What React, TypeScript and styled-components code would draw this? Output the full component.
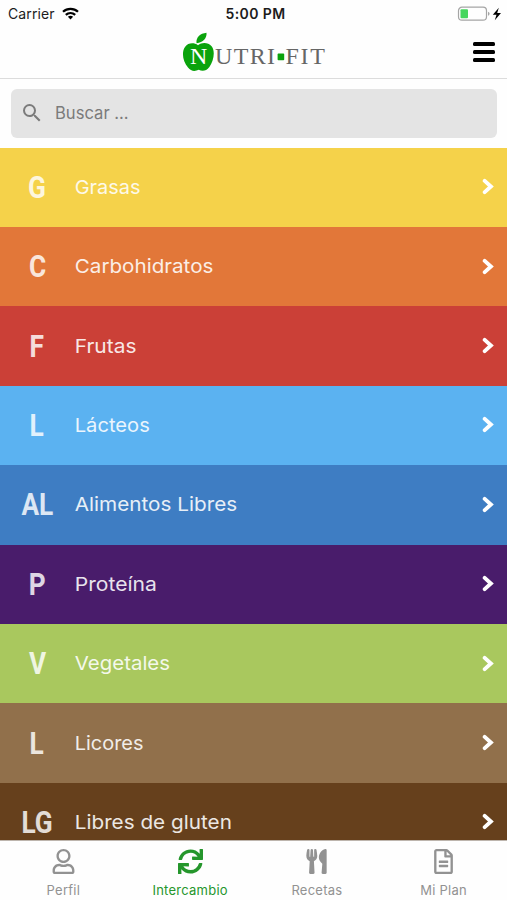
import React from "react";
import styled, { createGlobalStyle } from "styled-components";
import { FaRegUser, FaSync, FaUtensils, FaRegFileAlt } from "react-icons/fa";
import { MdSearch } from "react-icons/md";

const GlobalStyle = createGlobalStyle`
  * { box-sizing: border-box; }
  body { margin: 0; background: #fefefe; font-family: Inter, "Liberation Sans", sans-serif; }
`;

const Screen = styled.main`
  width: 507px;
  height: 900px;
  display: flex;
  flex-direction: column;
  overflow: hidden;
  background: #fefefe;
`;

const StatusBar = styled.div`
  flex: none;
  display: grid;
  grid-template-columns: 1fr auto 1fr;
  align-items: center;
  height: 27px;
  padding: 0 5px 0 8px;
  color: #1c1c1c;
`;

const Carrier = styled.div`
  display: flex;
  align-items: center;
  gap: 7px;
  font-size: 14px;
  letter-spacing: 0.12px;
`;

const Clock = styled.div`
  padding-left: 1px;
  font-size: 14px;
  font-weight: 600;
  letter-spacing: 0.4px;
`;

const Power = styled.div`
  display: flex;
  justify-content: flex-end;
`;

const Header = styled.header`
  flex: none;
  display: grid;
  grid-template-columns: 1fr auto 1fr;
  height: 52px;
  border-bottom: 1.5px solid #dcdcdc;
`;

const Logo = styled.div`
  grid-column: 2;
  display: flex;
  padding-top: 5px;
  svg { display: block; }
`;

const MenuButton = styled.button`
  justify-self: end;
  align-self: start;
  display: flex;
  flex-direction: column;
  gap: 4px;
  margin: 15px 12px 0 0;
  padding: 0;
  border: 0;
  background: none;
`;

const MenuLine = styled.span`
  width: 22px;
  height: 4px;
  border-radius: 1.5px;
  background: #000;
`;

const SearchArea = styled.div`
  flex: none;
  height: 68.6px;
  padding: 10px 10px 0 11px;
`;

const SearchField = styled.div`
  display: flex;
  align-items: center;
  gap: 11px;
  height: 49px;
  padding: 0 0 1px 9px;
  border-radius: 6px;
  background: #e4e4e4;
  color: #7b7b7b;
  font-size: 16.6px;
`;

const List = styled.ul`
  flex: 1;
  min-height: 0;
  overflow: hidden;
  margin: 0;
  padding: 0;
  list-style: none;
`;

const Row = styled.li<{ $color: string }>`
  display: grid;
  grid-template-columns: 74px 1fr 12px;
  align-items: center;
  height: 79.4px;
  padding: 0 13px 1px 0;
  background: ${(p) => p.$color};
  color: #fff;
`;

const Initials = styled.span`
  justify-self: center;
  font-family: Roboto, sans-serif;
  font-size: 32px;
  font-weight: 700;
  line-height: 1;
  opacity: 0.82;
  transform: scaleX(0.82);
`;

const Label = styled.span<{ $stretch: number }>`
  justify-self: start;
  padding: 1px 0 0 0.7px;
  font-size: 19px;
  font-weight: 400;
  white-space: nowrap;
  opacity: 0.88;
  transform: scaleX(${(p) => p.$stretch});
  transform-origin: left center;
`;

const TabBar = styled.nav`
  flex: none;
  display: grid;
  grid-template-columns: repeat(4, 1fr);
  height: 60px;
  border-top: 1px solid #bdb5ad;
  background: #fefefe;
`;

const Tab = styled.a<{ $active?: boolean }>`
  display: flex;
  flex-direction: column;
  align-items: center;
  padding-top: 8px;
  color: ${(p) => (p.$active ? "#25962c" : "#929292")};
  font-size: 13px;
`;

const TabText = styled.span`
  margin-top: 8px;
  line-height: 16px;
  letter-spacing: 0.25px;
`;

const WifiIcon = () => (
  <svg width="17" height="13" viewBox="0 0 17 13" fill="none" stroke="#000" strokeWidth="2.2">
    <path d="M1 4.8C5.2.8 11.8.8 16 4.8" />
    <path d="M3.8 7.9C6.5 5.4 10.5 5.4 13.2 7.9" />
    <path d="M5.9 9.7C7.4 8.4 9.6 8.4 11.1 9.7L8.5 12.5Z" fill="#000" stroke="none" />
  </svg>
);

const BatteryIcon = () => (
  <svg width="45" height="16" viewBox="0 0 45 16">
    <rect x="1.5" y="1.2" width="28" height="13" rx="3.5" fill="none" stroke="#a5a5a5" strokeWidth="1.2" />
    <path d="M31 5.7v4q1.6-.6 1.6-2T31 5.7Z" fill="#a5a5a5" />
    <rect x="3.5" y="3.2" width="7.5" height="9" rx="1" fill="#46d65e" />
    <path d="M41.8 1.8 35.8 8.8h3.7l-1.7 5.4 6.2-7.2h-3.8Z" fill="#000" />
  </svg>
);

const LogoMark = () => (
  <svg width="144" height="42" viewBox="0 0 144 42">
    <path d="M14.5 11.2C13.8 5.4 18 1.5 24.5.8 25 6 21.2 10.5 14.5 11.2Z" fill="#0aa30c" />
    <path
      d="M16 13.2C20 10.2 26 10.3 29.6 14.2 33.7 19.4 31.4 29.5 27.4 35 24.2 39.2 20.3 39.5 16.8 37.8 12.5 39.8 9 39.2 6 35.5 1 29.5-.8 20.5 3 15 6.3 10.5 12 10.5 16 13.2Z"
      fill="#0aa30c"
    />
    <g fontFamily="Liberation Serif, serif">
      <text x="8" y="32" fontSize="24" fill="#fff" textLength="17.3">N</text>
      <text x="33" y="32.3" fontSize="24" fill="#666" textLength="60">UTRI</text>
      <text x="103.5" y="32.3" fontSize="24" fill="#666" textLength="39.5">FIT</text>
    </g>
    <rect x="95.6" y="21.6" width="6.6" height="6.6" rx=".8" fill="#0aa30c" />
  </svg>
);

const Chevron = () => (
  <svg width="12" height="17" viewBox="0 0 12 17" fill="none">
    <path d="m2.7 2.9 6.2 5.6-6.2 5.6" stroke="#fff" strokeWidth="3.9" strokeLinecap="round" />
  </svg>
);

const groups = [
  { initials: "G", label: "Grasas", color: "#f5d24a", stretch: 1.05 },
  { initials: "C", label: "Carbohidratos", color: "#e27739", stretch: 1.085 },
  { initials: "F", label: "Frutas", color: "#cb4037", stretch: 1.1 },
  { initials: "L", label: "Lácteos", color: "#5bb2f1", stretch: 1.06 },
  { initials: "AL", label: "Alimentos Libres", color: "#3e7dc3", stretch: 1.09 },
  { initials: "P", label: "Proteína", color: "#491c6b", stretch: 1.11 },
  { initials: "V", label: "Vegetales", color: "#a9c85e", stretch: 1.075 },
  { initials: "L", label: "Licores", color: "#91704b", stretch: 1.05 },
  { initials: "LG", label: "Libres de gluten", color: "#66401c", stretch: 1.09 },
];

const tabs = [
  { label: "Perfil", Icon: FaRegUser },
  { label: "Intercambio", Icon: FaSync, active: true },
  { label: "Recetas", Icon: FaUtensils },
  { label: "Mi Plan", Icon: FaRegFileAlt },
];

export default function App() {
  return (
    <Screen>
      <GlobalStyle />
      <StatusBar>
        <Carrier>Carrier <WifiIcon /></Carrier>
        <Clock>5:00 PM</Clock>
        <Power><BatteryIcon /></Power>
      </StatusBar>
      <Header>
        <Logo><LogoMark /></Logo>
        <MenuButton aria-label="Menú"><MenuLine /><MenuLine /><MenuLine /></MenuButton>
      </Header>
      <SearchArea>
        <SearchField><MdSearch size={24} />Buscar ...</SearchField>
      </SearchArea>
      <List>
        {groups.map((g) => (
          <Row key={g.label} $color={g.color}>
            <Initials>{g.initials}</Initials>
            <Label $stretch={g.stretch}>{g.label}</Label>
            <Chevron />
          </Row>
        ))}
      </List>
      <TabBar>
        {tabs.map(({ label, Icon, active }) => (
          <Tab key={label} $active={active}>
            <Icon size={25} />
            <TabText>{label}</TabText>
          </Tab>
        ))}
      </TabBar>
    </Screen>
  );
}
